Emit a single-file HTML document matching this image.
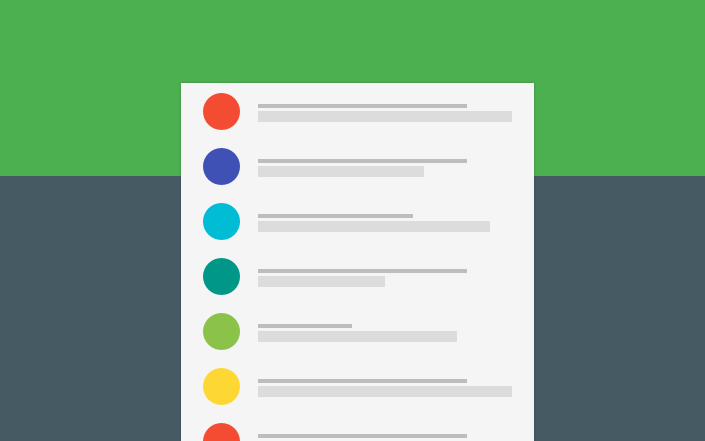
<html style="overflow:hidden;height:441px"><head><style>
html,body{margin:0;width:705px;height:441px;overflow:hidden}
body{background:#465a64;position:relative}
.g{position:absolute;left:0;top:0;width:705px;height:176px;background:#4caf50}
.card{position:absolute;left:181px;top:83px;width:353px;height:358px;background:#f5f5f5;box-shadow:0 0 2px rgba(0,0,0,.25);overflow:hidden}
.c{position:absolute;left:22px;width:37px;height:37px;border-radius:50%}
.a{position:absolute;left:77px;height:4px;background:#bdbdbd}
.b{position:absolute;left:77px;height:11px;background:#dcdcdc}
</style></head><body><div class="g"></div><div class="card">
<div class="c" style="top:10px;background:#f44c32"></div><div class="a" style="top:21px;width:209px"></div><div class="b" style="top:28px;width:254px"></div>
<div class="c" style="top:65px;background:#3f51b5"></div><div class="a" style="top:76px;width:209px"></div><div class="b" style="top:83px;width:166px"></div>
<div class="c" style="top:120px;background:#00bcd4"></div><div class="a" style="top:131px;width:155px"></div><div class="b" style="top:138px;width:232px"></div>
<div class="c" style="top:175px;background:#009688"></div><div class="a" style="top:186px;width:209px"></div><div class="b" style="top:193px;width:127px"></div>
<div class="c" style="top:230px;background:#8bc34a"></div><div class="a" style="top:241px;width:94px"></div><div class="b" style="top:248px;width:199px"></div>
<div class="c" style="top:285px;background:#fdd835"></div><div class="a" style="top:296px;width:209px"></div><div class="b" style="top:303px;width:254px"></div>
<div class="c" style="top:340px;background:#f44c32"></div><div class="a" style="top:351px;width:209px"></div><div class="b" style="top:358px;width:254px"></div>
</div></body></html>
